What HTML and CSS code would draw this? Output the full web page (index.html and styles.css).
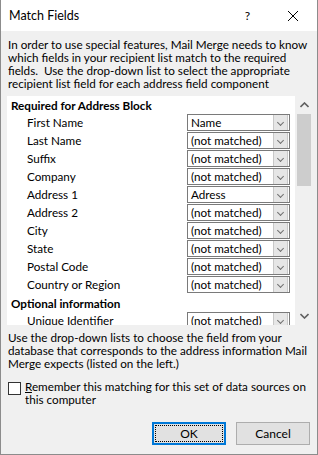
FILE: index.html
```html
<!DOCTYPE html>
<html lang="en">
<head>
  <meta charset="UTF-8">
  <title>Match Fields</title>
  <link rel="stylesheet" href="styles.css">
</head>
<body>
  <div class="dialog">
    <div class="titlebar">
      <span class="title">Match Fields</span>
      <span class="help">?</span>
      <span class="close">
        <svg width="12" height="12" viewBox="0 0 12 12"><path d="M1 1 L11 11 M11 1 L1 11" stroke="#000" stroke-width="1" fill="none"/></svg>
      </span>
    </div>

    <div class="content">
      <p class="intro">In order to use special features, Mail Merge needs to know which fields in your recipient list match to the required fields.&nbsp; Use the drop-down list to select the appropriate recipient list field for each address field component</p>

      <!-- Field list + scrollbar -->
      <div class="fields">
        <div class="list">
          <div class="group">Required for Address Block</div>
          <div class="row"><span class="label">First Name</span><div class="combo"><span class="value">Name</span><span class="arrow"></span></div></div>
          <div class="row"><span class="label">Last Name</span><div class="combo"><span class="value">(not matched)</span><span class="arrow"></span></div></div>
          <div class="row"><span class="label">Suffix</span><div class="combo"><span class="value">(not matched)</span><span class="arrow"></span></div></div>
          <div class="row"><span class="label">Company</span><div class="combo"><span class="value">(not matched)</span><span class="arrow"></span></div></div>
          <div class="row"><span class="label">Address 1</span><div class="combo"><span class="value">Adress</span><span class="arrow"></span></div></div>
          <div class="row"><span class="label">Address 2</span><div class="combo"><span class="value">(not matched)</span><span class="arrow"></span></div></div>
          <div class="row"><span class="label">City</span><div class="combo"><span class="value">(not matched)</span><span class="arrow"></span></div></div>
          <div class="row"><span class="label">State</span><div class="combo"><span class="value">(not matched)</span><span class="arrow"></span></div></div>
          <div class="row"><span class="label">Postal Code</span><div class="combo"><span class="value">(not matched)</span><span class="arrow"></span></div></div>
          <div class="row"><span class="label">Country or Region</span><div class="combo"><span class="value">(not matched)</span><span class="arrow"></span></div></div>
          <div class="group">Optional information</div>
          <div class="row"><span class="label">Unique Identifier</span><div class="combo"><span class="value">(not matched)</span><span class="arrow"></span></div></div>
        </div>
        <div class="scrollbar">
          <div class="step">
            <svg width="9" height="6" viewBox="0 0 9 6"><path d="M0.5 5 L4.5 1 L8.5 5" stroke="#606060" stroke-width="1.6" fill="none"/></svg>
          </div>
          <div class="thumb"></div>
          <div class="track"></div>
          <div class="step">
            <svg width="9" height="6" viewBox="0 0 9 6"><path d="M0.5 1 L4.5 5 L8.5 1" stroke="#606060" stroke-width="1.6" fill="none"/></svg>
          </div>
        </div>
      </div>

      <p class="hint">Use the drop-down lists to choose the field from your database that corresponds to the address information Mail Merge expects (listed on the left.)</p>

      <div class="remember">
        <span class="checkbox"></span>
        <span class="remember-text"><span class="key">R</span>emember this matching for this set of data sources on this computer</span>
      </div>

      <div class="buttons">
        <button class="ok"><span>OK</span></button>
        <button>Cancel</button>
      </div>
    </div>
  </div>
</body>
</html>
```

FILE: styles.css
```css
body {
  margin: 0;
  padding: 0;
  font-family: Lato, "Noto Sans", sans-serif;
  font-size: 11.7px;
  color: #000;
  background: #f0f0f0;
}

.dialog {
  width: 318px;
  height: 455px;
  box-sizing: border-box;
  border: 1px solid #8c8c8c;
  border-top: none;
  background: #f0f0f0;
  overflow: hidden;
}

.titlebar {
  height: 31px;
  background: #fff;
  display: flex;
  align-items: center;
  padding-left: 8px;
}

.titlebar .title {
  flex: 1;
  font-size: 12.5px;
}

.titlebar .help {
  font-size: 12px;
  margin-right: 37px;
}

.titlebar .close {
  display: flex;
  margin-right: 18px;
}

.content {
  padding: 7px 4px 0 6px;
}

.intro, .hint {
  margin: 0;
  line-height: 13px;
  padding-left: 1px;
}

.fields {
  margin-top: 6px;
  height: 229px;
  display: flex;
  overflow: hidden;
}

.list {
  flex: 1;
  background: #fff;
}

.group {
  height: 18px;
  line-height: 18px;
  font-weight: bold;
  padding-left: 4px;
}

.row {
  height: 18px;
  display: flex;
  align-items: flex-start;
}

.row .label {
  width: 160px;
  padding-left: 20px;
  line-height: 17px;
}

.combo {
  width: 101px;
  height: 15px;
  border: 1px solid #7a7a7a;
  background: #fff;
  display: flex;
  align-items: stretch;
}

.combo .value {
  flex: 1;
  padding-left: 3px;
  line-height: 15px;
  white-space: nowrap;
  overflow: hidden;
}

.combo .arrow {
  width: 13px;
  margin: 0 1px 0 0;
  border: 1px solid #c8c8c8;
  border-top-width: 0;
  border-bottom-width: 0;
  background: #e6e6e6;
  position: relative;
}

.combo .arrow::after {
  content: "";
  position: absolute;
  left: 4px;
  top: 5px;
  width: 4px;
  height: 4px;
  border-right: 1px solid #707070;
  border-bottom: 1px solid #707070;
  transform: rotate(45deg);
}

.scrollbar {
  width: 18px;
  background: #f0f0f0;
  display: flex;
  flex-direction: column;
}

.scrollbar .step {
  height: 18px;
  display: flex;
  align-items: center;
  justify-content: center;
}

.scrollbar .thumb {
  height: 72px;
  margin: 0 2px;
  background: #cdcdcd;
}

.scrollbar .track {
  flex: 1;
}

.hint {
  margin-top: 6px;
}

.remember {
  margin-top: 10px;
  display: flex;
  align-items: flex-start;
}

.checkbox {
  width: 11px;
  height: 11px;
  border: 1px solid #333;
  background: #fff;
  margin: 2px 4px 0 1px;
  flex-shrink: 0;
}

.remember-text {
  line-height: 13px;
}

.remember-text .key {
  text-decoration: underline;
}

.buttons {
  margin-top: 16px;
  display: flex;
  justify-content: flex-end;
  gap: 10px;
  padding-right: 3px;
}

button {
  width: 74px;
  height: 23px;
  font-family: inherit;
  font-size: 12px;
  color: #000;
  background: #e1e1e1;
  border: 1px solid #adadad;
  padding: 0;
}

button.ok {
  border: 2px solid #0078d7;
  padding: 1px;
}

button.ok span {
  display: block;
  height: 100%;
  box-sizing: border-box;
  border: 1px dotted #000;
  line-height: 15px;
}
```
